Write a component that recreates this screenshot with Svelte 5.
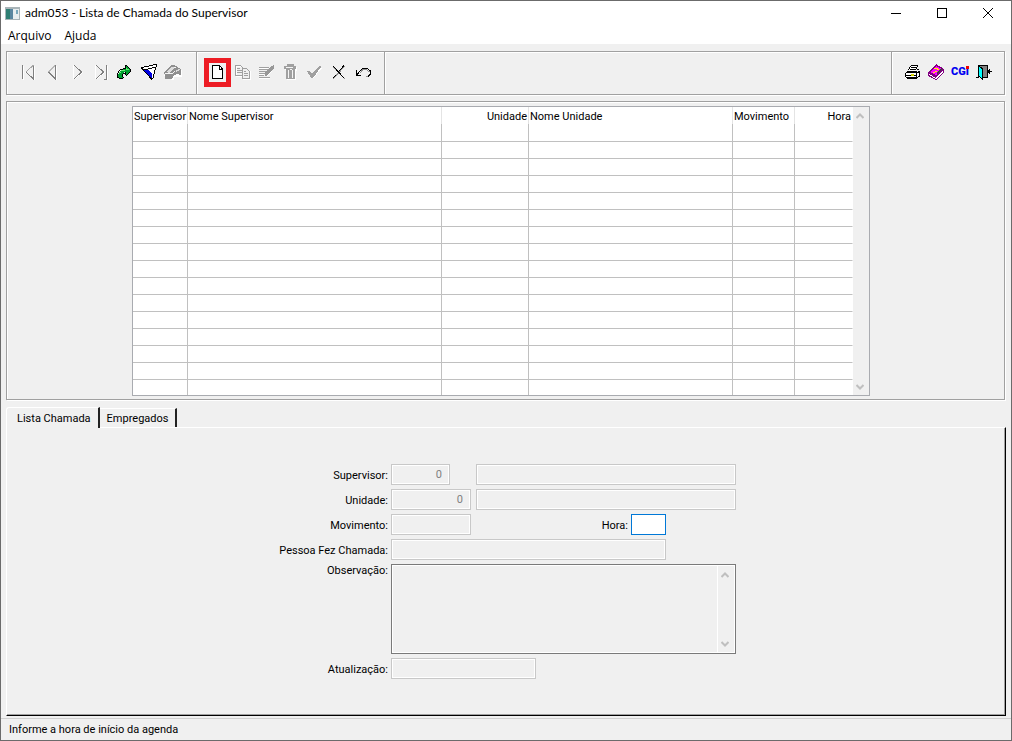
<script lang="ts">
  const title = "adm053 - Lista de Chamada do Supervisor";
  const menus = ["Arquivo", "Ajuda"];

  const navTools = [
    { id: "first", label: "Primeiro" },
    { id: "prev", label: "Anterior" },
    { id: "next", label: "Próximo" },
    { id: "last", label: "Último" },
    { id: "goto", label: "Ir para" },
    { id: "filter", label: "Filtrar" },
    { id: "search", label: "Pesquisar" },
  ];
  const editTools = [
    { id: "new", label: "Novo" },
    { id: "copy", label: "Copiar" },
    { id: "edit", label: "Modificar" },
    { id: "trash", label: "Eliminar" },
    { id: "check", label: "Confirmar" },
    { id: "cancel", label: "Cancelar" },
    { id: "undo", label: "Desfazer" },
  ];
  const appTools = [
    { id: "print", label: "Imprimir" },
    { id: "help", label: "Ajuda" },
    { id: "cgi", label: "CGI" },
    { id: "exit", label: "Sair" },
  ];

  const columns = [
    { name: "Supervisor", cls: "c-sup" },
    { name: "Nome Supervisor", cls: "c-nsup" },
    { name: "Unidade", cls: "c-uni num" },
    { name: "Nome Unidade", cls: "c-nuni" },
    { name: "Movimento", cls: "c-mov" },
    { name: "Hora", cls: "c-hora num" },
  ];
  const rows = Array.from({ length: 16 }, (_, i) => i);

  const tabs = ["Lista Chamada", "Empregados"];
  let activeTab = $state(0);
  let hora = $state("");
</script>

{#snippet icon(id: string)}
  <svg class="icon" viewBox="0 0 18 16" width="18" height="16" shape-rendering="crispEdges" fill="none" aria-hidden="true">
    {#if id === "first"}
      <path d="M3.5 2V16M14.5 2V16M5 9L13 1" stroke="#fff" />
      <path d="M2.5 1V15M13.5 1V15L6 8" stroke="#808080" />
      <path d="M6 8L13.5 1" stroke="#a8a8a8" />
    {:else if id === "prev"}
      <path d="M12.5 2V16" stroke="#fff" />
      <path d="M11.5 1L4.5 8" stroke="#b8b8b8" />
      <path d="M11.5 1V15L4.5 8" stroke="#808080" />
    {:else if id === "next"}
      <path d="M5.5 15V1M7 15L14.5 8" stroke="#fff" />
      <path d="M6 1L13.5 8L6 15" stroke="#808080" />
    {:else if id === "last"}
      <path d="M3.5 15V1M5 15L12.5 8M15.5 2V16" stroke="#fff" />
      <path d="M4 1L11.5 8L4 15M14.5 1V15M12 15H15" stroke="#808080" />
    {:else if id === "goto"}
      <path d="M2 14V10H3V8H4V7H5V6H7V5H10V2H11V3H12V4H13V5H14V8H13V9H12V10H11V11H10V8H8V9H7V10H6V13H7V15H4V14Z" fill="#00a030" />
      <path d="M1 9h1v5h-1zM2 7h1v2h-1zM3 6h1v1h-1zM4 5h3v1h-3zM7 4h3v1h-3zM9 1h1v3h-1zM10 1h1v1h-1zM11 2h1v1h-1zM12 3h1v1h-1zM13 4h1v1h-1zM14 5h1v3h-1zM13 8h1v1h-1zM12 9h1v1h-1zM11 10h1v1h-1zM9 8h1v3h-1zM10 11h1v1h-1zM7 9h2v1h-2zM6 10h1v3h-1zM7 13h1v1h-1zM2 13h1v1h-1zM3 14h4v1h-4z" fill="#000" />
      <path d="M3 8h2v1h-2zM5 6h4v1h-4zM10 4h1v1h-1zM10 5h3v1h-3z" fill="#60f070" />
    {:else if id === "filter"}
      <path d="M1 3L9 1L17 0L13 16H12Z" fill="#fff" />
      <path d="M3 5H7L12 10V15H11Z" fill="#0000e0" />
      <path d="M1 3.5H4M4 2.5H9M9 1.5H13M13 0.5H17M1.5 4L12 15.5M16.5 1L12.5 15.5M3 5.5H8M8 4.5H12M12 3.5H15" stroke="#000" />
    {:else if id === "search"}
      <path d="M0 12L8 16H10V13H18V6L9 2Z" fill="#fff" />
      <path d="M0 10V8L3 5L8 1H10L17 5V11L13 10L10 11L8 15H1V11Z" fill="#909090" />
      <path d="M2 8L8 3L11 4L5 9ZM12 6L15 5L16 6L12 8Z" fill="#dcdcdc" />
      <path d="M1 9.5H8L11 7.5M10 3.5H12" stroke="#f4f4f4" />
    {:else if id === "new"}
      <path d="M3.5 1.5H10.5L13.5 5V14.5H3.5Z" fill="#fff" stroke="#000" />
      <path d="M10.5 2V5.5H13" stroke="#000" />
    {:else if id === "copy"}
      <path d="M3.5 2.5H8L11.5 5V12.5H3.5ZM10.5 5.5H14L17.5 8V15.5H10.5Z" stroke="#fff" />
      <path d="M2.5 1.5H7.5L10.5 4.5V11.5H2.5ZM4 4.5H7M4 6.5H9M4 8.5H9" stroke="#a0a0a0" />
      <path d="M9.5 4.5H13.5L16.5 7.5V14.5H9.5Z" fill="#f0f0f0" stroke="#a0a0a0" />
      <path d="M11 7.5H13M11 9.5H15M11 11.5H15" stroke="#a0a0a0" />
    {:else if id === "edit"}
      <path d="M2 4.5H11M2 7.5H9M2 10.5H7M2 14.5H13M10 12L17 4" stroke="#fff" />
      <path d="M2 3.5H12M2 5.5H11M2 7.5H9M2 9.5H8M2 11.5H7M2 13.5H13" stroke="#a0a0a0" />
      <path d="M8 12V9L14 2L17 1V4L11 11Z" fill="#989898" />
    {:else if id === "trash"}
      <path d="M4 3H16V7H15V16H6Z" fill="#fff" />
      <path d="M3 2H6V0H13V2H15V5H14V15H5V5H3Z" fill="#a0a0a0" />
      <path d="M5 3.5H12M7.5 6V14M11.5 6V14M9 5.5H11" stroke="#f4f4f4" />
    {:else if id === "check"}
      <path d="M4 9L7 11L15 3L17 4L8 15Z" fill="#fff" />
      <path d="M2 7H5L7 10L14 2H16V3L8 14H6Z" fill="#a0a0a0" />
    {:else if id === "cancel"}
      <path d="M4 2.5L16 15M16 2L4 15" stroke="#909090" />
      <path d="M4 2L15 14M15 1.5L9 8.5M7 11L4 14" stroke="#000" />
    {:else if id === "undo"}
      <path d="M3.5 6V11.5H8M4 11L7 7L10 4.5H14L17.5 7V10L15 12.5" stroke="#000" />
      <path d="M7 9L10 5.5H13L16.5 8M13 12.5H15" stroke="#909090" />
    {:else if id === "print"}
      <path d="M6 6L8 1H15L13 6V8H17V11L14 15H3L2 13V9L5 7Z" fill="#fff" />
      <path d="M7.5 1.5H15M7.5 2L5.5 6M14.5 2L12.5 6M8 3.5H13M7 5.5H12M4 7.5H14M2.5 9V13M3 8.5H13.5V13.5H3M3 11.5H13M4 14.5H13L16.5 12V7.5L13.5 9M14 5.5H16" stroke="#000" />
      <path d="M8 10.5H11" stroke="#d8d800" stroke-width="2" />
    {:else if id === "help"}
      <path d="M1 9L9 0L17 5V8L9 16L1 12Z" fill="#800080" />
      <path d="M2 10V11L9 15L16 8V7L9 13Z" fill="#fff" />
      <path d="M3 8L9 2L15 5L9 11Z" fill="#ff00ff" />
      <path d="M10 10L16 5L14 4L10 8Z" fill="#404040" />
      <path d="M7 4.5H11M10 5.5H12M8 7.5H10M6 8.5H8" stroke="#ffff00" />
      <path d="M4 10.5L9 13.5" stroke="#800080" />
    {:else if id === "exit"}
      <path d="M4 2H12V13H8V4Z" fill="#808080" />
      <path d="M4 3L7 5V15L4 12Z" fill="#00ffff" />
      <path d="M1 13.5H4M3.5 2V13M3 1.5H12.5V13.5H8M4 2L7.5 5V15L4 12.5" stroke="#000" />
      <path d="M12 7.5H17M14.5 5V10M13.5 6V9" stroke="#000" />
    {/if}
  </svg>
{/snippet}

{#snippet scrollbar()}
  <div class="scrollbar" aria-hidden="true">
    <svg viewBox="0 0 8 6" width="8" height="6"><path d="M0.5 5L4 1.5L7.5 5" /></svg>
    <svg viewBox="0 0 8 6" width="8" height="6"><path d="M0.5 1L4 4.5L7.5 1" /></svg>
  </div>
{/snippet}

<div class="window">
  <header class="titlebar">
    <svg class="appicon" viewBox="0 0 15 13" width="15" height="13" shape-rendering="crispEdges" aria-hidden="true">
      <path d="M0 0H15V13H0Z" fill="#a9b4b8" />
      <path d="M1 2H14V12H1Z" fill="#e8eef0" />
      <path d="M1 2H8V12H1Z" fill="#2f7f74" />
      <path d="M5 2H8V12H5Z" fill="#5a86a0" />
      <path d="M11 3H13V7H11Z" fill="#79a8bd" />
    </svg>
    <h1>{title}</h1>
    <div class="controls">
      <button aria-label="Minimizar"><svg viewBox="0 0 10 10" width="10" height="10"><path d="M0 5.5H10" /></svg></button>
      <button aria-label="Maximizar"><svg viewBox="0 0 10 10" width="10" height="10"><path d="M0.5 0.5H9.5V9.5H0.5Z" /></svg></button>
      <button aria-label="Fechar"><svg class="close" viewBox="0 0 10 10" width="10" height="10"><path d="M0 0L10 10M10 0L0 10" /></svg></button>
    </div>
  </header>

  <nav class="menubar">
    {#each menus as m}
      <button>{m}</button>
    {/each}
  </nav>

  <div class="toolbar etched">
    <div class="group nav">
      {#each navTools as t (t.id)}
        <button class="tool" aria-label={t.label}>{@render icon(t.id)}</button>
      {/each}
    </div>
    <div class="group edit">
      {#each editTools as t (t.id)}
        <button class="tool" class:marked={t.id === "new"} aria-label={t.label}>{@render icon(t.id)}</button>
      {/each}
    </div>
    <div class="group fill"></div>
    <div class="group app">
      {#each appTools as t (t.id)}
        <button class="tool" aria-label={t.label}>
          {#if t.id === "cgi"}
            <span class="cgi">CG<i>ı</i></span>
          {:else}
            {@render icon(t.id)}
          {/if}
        </button>
      {/each}
    </div>
  </div>

  <section class="browse etched">
    <div class="grid">
      <table>
        <thead>
          <tr>
            {#each columns as c}
              <th class={c.cls}>{c.name}</th>
            {/each}
          </tr>
        </thead>
        <tbody>
          {#each rows as r (r)}
            <tr>
              {#each columns as c}<td></td>{/each}
            </tr>
          {/each}
        </tbody>
      </table>
      {@render scrollbar()}
    </div>
  </section>

  <div class="tabs" role="tablist">
    {#each tabs as t, i}
      <button role="tab" class:active={activeTab === i} aria-selected={activeTab === i} onclick={() => (activeTab = i)}>{t}</button>
    {/each}
  </div>

  <main class="panel">
    <form>
      <label for="supervisor">Supervisor:</label>
      <div class="line">
        <input id="supervisor" class="w-code num" value="0" disabled />
        <input class="w-name" aria-label="Nome Supervisor" disabled />
      </div>

      <label for="unidade">Unidade:</label>
      <div class="line">
        <input id="unidade" class="w-unit num" value="0" disabled />
        <input class="w-name" aria-label="Nome Unidade" disabled />
      </div>

      <label for="movimento">Movimento:</label>
      <div class="line short">
        <input id="movimento" class="w-unit" disabled />
        <div class="pair">
          <label for="hora">Hora:</label>
          <input id="hora" class="w-hora" bind:value={hora} />
        </div>
      </div>

      <label for="pessoa">Pessoa Fez Chamada:</label>
      <div class="line short">
        <input id="pessoa" class="w-full" disabled />
      </div>

      <label class="top" for="obs">Observação:</label>
      <div class="memo">
        <textarea id="obs" disabled></textarea>
        {@render scrollbar()}
      </div>

      <label for="atualizacao">Atualização:</label>
      <div class="line">
        <input id="atualizacao" class="w-stamp" disabled />
      </div>
    </form>
  </main>

  <footer>Informe a hora de início da agenda</footer>
</div>

<style>
  :global(body) {
    margin: 0;
    background: #f0f0f0;
  }
  .window {
    box-sizing: border-box;
    min-height: 100vh;
    display: flex;
    flex-direction: column;
    border: 1px solid #6b6b6b;
    background: #f0f0f0;
    color: #000;
    font-family: Roboto, "Liberation Sans", sans-serif;
    font-size: 11px;
    line-height: 14px;
  }
  button,
  input,
  textarea {
    font: inherit;
    color: inherit;
    margin: 0;
    padding: 0;
    border: 0;
    background: none;
    box-sizing: border-box;
  }

  /* title bar and menu */
  .titlebar {
    display: flex;
    align-items: center;
    height: 24px;
    padding-left: 4px;
    background: #fff;
    font-family: Lato, "Open Sans", sans-serif;
  }
  h1 {
    flex: 1;
    margin: 0 0 0 5px;
    font-size: 12px;
    font-weight: 400;
  }
  .controls {
    display: flex;
    height: 100%;
  }
  .controls button {
    display: flex;
    align-items: center;
    justify-content: center;
    width: 46px;
  }
  .controls svg {
    fill: none;
    stroke: #000;
    shape-rendering: crispEdges;
  }
  .controls .close {
    shape-rendering: auto;
  }
  .menubar {
    display: flex;
    gap: 13px;
    height: 19px;
    padding: 0 7px;
    background: #fff;
    font-family: "Open Sans", "Noto Sans", sans-serif;
    font-size: 12px;
  }
  .menubar button {
    padding-top: 2px;
  }

  .etched {
    border: 1px solid #a0a0a0;
    box-shadow: 1px 1px 0 #fff, inset 1px 1px 0 #fff;
  }

  /* toolbar */
  .toolbar {
    display: flex;
    height: 42px;
    margin: 7px 6px 0 5px;
  }
  .group {
    display: flex;
    align-items: center;
    box-sizing: border-box;
    padding-bottom: 2px;
    border-right: 1px solid #a0a0a0;
    box-shadow: 1px 0 0 #fff;
  }
  .group.nav {
    width: 190px;
    padding-left: 10px;
  }
  .group.edit {
    width: 188px;
    padding-left: 7px;
  }
  .group.fill {
    flex: 1;
  }
  .group.app {
    width: 112px;
    padding-left: 8px;
    border-right: 0;
    box-shadow: none;
  }
  .tool {
    display: flex;
    align-items: center;
    justify-content: center;
    width: 24px;
    height: 29px;
  }
  .tool.marked {
    width: 27px;
    margin-right: -1px;
    border: 5px solid #ed1c24;
  }
  .icon {
    flex: none;
  }
  .cgi {
    color: #0000f0;
    font-family: Roboto, "Liberation Sans", sans-serif;
    font-size: 11px;
    font-weight: 900;
  }
  .cgi i {
    position: relative;
    font-style: normal;
  }
  .cgi i::before {
    content: "";
    position: absolute;
    top: 1px;
    left: 0;
    width: 3px;
    height: 3px;
    background: #f00000;
  }

  /* browse */
  .browse {
    display: flex;
    justify-content: center;
    margin: 6px 6px 0 5px;
    padding: 4px 9px 3px 0;
  }
  .grid {
    display: flex;
    border: 1px solid #a9abb0;
    background: #fff;
  }
  table {
    table-layout: fixed;
    width: 720px;
    border-collapse: separate;
    border-spacing: 0;
  }
  th {
    height: 17px;
    padding: 2px 1px 0 1px;
    box-sizing: border-box;
    border-right: 1px solid #e4e4e4;
    font-weight: 400;
    text-align: left;
    white-space: nowrap;
  }
  th.num {
    text-align: right;
  }
  th:last-child {
    border-right-color: #fff;
  }
  td {
    height: 17px;
    padding: 0;
    box-sizing: border-box;
    border-right: 1px solid #c0c0c0;
    border-bottom: 1px solid #c0c0c0;
  }
  td:last-child {
    border-right-color: #fff;
  }
  tbody tr:first-child td {
    height: 18px;
  }
  tbody tr:last-child td {
    height: 15px;
    border-bottom: 0;
  }
  .c-sup {
    width: 55px;
  }
  .c-nsup {
    width: 254px;
  }
  .c-uni {
    width: 87px;
  }
  .c-nuni {
    width: 204px;
  }
  .c-mov {
    width: 62px;
  }
  .c-hora {
    width: 58px;
  }
  .scrollbar {
    display: flex;
    flex-direction: column;
    align-items: center;
    justify-content: space-between;
    width: 16px;
    padding: 6px 2px 5px 0;
    box-sizing: border-box;
    background: #f0f0f0;
  }
  .scrollbar path {
    fill: none;
    stroke: #bfbfbf;
    stroke-width: 2;
  }

  /* tabs */
  .tabs {
    display: flex;
    align-items: flex-end;
    margin: 7px 6px 0 5px;
    position: relative;
    z-index: 1;
  }
  .tabs button {
    height: 19px;
    padding: 2px 7px 0 7px;
    border-top: 1px solid #fff;
    border-right: 2px solid #222;
  }
  .tabs button.active {
    height: 21px;
    padding: 2px 7px 0 10px;
    margin-bottom: -1px;
    border-left: 1px solid #fff;
    border-top-left-radius: 3px;
    background: #f0f0f0;
  }
  .panel {
    flex: 1;
    margin: 0 5px 2px 5px;
    padding: 36px 0 0 6px;
    border: 1px solid #000;
    border-top-color: #fff;
    border-left-color: #fff;
    box-shadow: inset -1px -1px 0 #a0a0a0;
  }

  form {
    display: grid;
    grid-template-columns: 106px 345px;
    justify-content: center;
    align-items: center;
    gap: 4px 3px;
  }
  label {
    padding-top: 2px;
    white-space: nowrap;
  }
  form > label {
    justify-self: end;
  }
  form > label.top {
    align-self: start;
    padding-top: 0;
  }
  .line {
    display: flex;
    justify-content: space-between;
  }
  .line.short {
    width: 275px;
  }
  .pair {
    display: flex;
    align-items: center;
    gap: 3px;
  }
  input {
    height: 21px;
    padding: 0 7px;
    border: 1px solid #0078d7;
    background: #fff;
  }
  input:disabled {
    border-color: #c8c8c8;
    background: #f0f0f0;
    box-shadow: inset 0 0 0 1px #fff;
    color: #808080;
  }
  input.num {
    text-align: right;
  }
  .w-code {
    width: 59px;
  }
  .w-unit {
    width: 80px;
  }
  .w-name {
    width: 260px;
  }
  .w-hora {
    width: 35px;
    padding: 0 3px;
  }
  .w-full {
    width: 100%;
  }
  .w-stamp {
    width: 145px;
  }
  .memo {
    display: flex;
    height: 90px;
    box-sizing: border-box;
    border: 1px solid #7a7a7a;
    box-shadow: inset 0 0 0 1px #fff;
    padding: 1px;
  }
  .memo textarea {
    flex: 1;
    resize: none;
    border-right: 1px solid #fff;
  }

  footer {
    height: 21px;
    padding-left: 8px;
    border-top: 1px solid #d0d0d0;
    line-height: 21px;
  }
</style>
